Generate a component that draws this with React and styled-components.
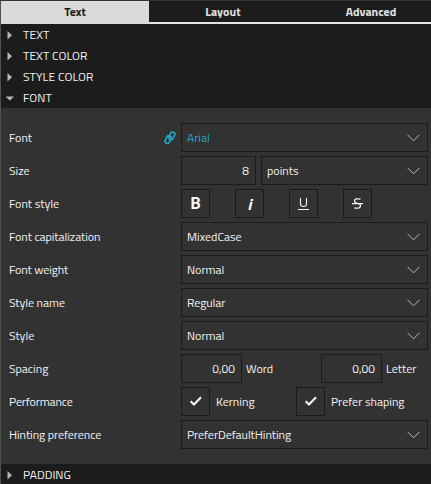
import React from "react";
import styled, { createGlobalStyle } from "styled-components";

const Global = createGlobalStyle`
  * { box-sizing: border-box; }
  body { margin: 0; background: #323232; overflow: hidden; }
`;
const Panel = styled.main`
  width: 431px; height: 484px; display: flex; flex-direction: column; overflow: hidden;
  border: solid #50504c; border-width: 1px 0 0 1px; border-top-color: #343434;
  background: #323232; color: #f2f2f2;
  font: 12px/16px "Titillium Web", Roboto, sans-serif;
`;
const Tabs = styled.nav`
  height: 23px; flex: none; display: grid; grid-template-columns: repeat(3, 148px);
  background: #1c1c1c; border-bottom: 2px solid #e2e2e2;
`;
const Tab = styled.button`
  height: ${p => (p.$active ? 23 : 21)}px; border: 0; font: inherit; font-weight: 700;
  padding: ${p => (p.$active ? "0 0 1px" : "1px 0 0")};
  background: ${p => (p.$active ? "#dadada" : "#1c1c1c")};
  color: ${p => (p.$active ? "#1c1c1c" : "#e2e2e2")};
`;
const SectionHeader = styled.header`
  height: 21px; flex: none; display: grid; grid-template-columns: 14px 1fr; column-gap: 6px;
  align-items: center; padding: 1px 0 0 2px; background: #1c1c1c;
`;
const Arrow = styled.svg`
  width: 14px; height: 14px; display: block; fill: #b8b8b8;
`;
const Form = styled.section`
  height: 356px; flex: none; padding: 15px 3px 0 8px; display: flex; flex-direction: column; gap: 4px;
`;
const Row = styled.div`
  height: 29px; display: grid; grid-template-columns: 155px 17px 1fr; align-items: center;
`;
const Text = styled.span`
  white-space: nowrap; letter-spacing: ${p => p.$ls || 0}px; color: ${p => p.$color || "inherit"};
`;
const Controls = styled.div`
  display: flex; height: 29px; align-items: center;
`;
const Field = styled.div`
  width: ${p => p.$w}px; height: 29px; flex: none; display: flex; align-items: center;
  justify-content: ${p => p.$justify || "space-between"}; border: 1px dotted #111;
  background: linear-gradient(#323232, #323232) padding-box, linear-gradient(#252525, #252525) border-box;
  padding: 0 ${p => p.$pr ?? 7}px 0 ${p => p.$pl ?? 5}px; margin-right: ${p => p.$mr || 0}px;
`;
const Pair = styled.div`
  width: ${p => p.$w}px; display: flex; align-items: center;
`;
const Icon = styled.svg`
  display: block; flex: none; fill: none; stroke: ${p => p.$color || "#f4f4f4"}; stroke-width: ${p => p.$sw || 1};
`;
const Glyph = styled.span`
  font: ${p => (p.$italic ? "italic" : "normal")} 700 16px/20px ${p => (p.$italic ? '"Titillium Web", ' : "")}Roboto, sans-serif;
  color: #fafafa;
`;

const Chevron = () => <Icon width="13" height="8" viewBox="0 0 13 8" $color="#b8b8b8"><path d="M.5 .8 6.5 6.8 12.5 .8" /></Icon>;
const Check = () => <Icon width="14" height="11" viewBox="0 0 14 11" $sw={2.1}><path d="M1.7 5.2 5 8.5 12 1.3" /></Icon>;
const LinkIcon = () => (
  <Icon width="12" height="14" viewBox="0 0 12 14" $color="#26a6cb" $sw={1.6}>
    <rect x="-2.2" y="-3.8" width="4.4" height="7.6" rx="1.6" transform="translate(7.8 4.9) rotate(27)" />
    <rect x="-2.2" y="-3.8" width="4.4" height="7.6" rx="1.6" transform="translate(4.1 8.6) rotate(27)" />
  </Icon>
);
const Header = ({ open, label, ls }) => (
  <SectionHeader>
    <Arrow viewBox="0 0 14 14"><path d={open ? "M2.5 5.5H11L6.8 9.5Z" : "M4.5 3V11.5L9 7.2Z"} /></Arrow>
    <Text $ls={ls}>{label}</Text>
  </SectionHeader>
);
const FormRow = ({ label, ls, linked, children }) => (
  <Row><Text $ls={ls}>{label}</Text><span>{linked && <LinkIcon />}</span><Controls>{children}</Controls></Row>
);
const Select = ({ w = 247, value, color, ls }) => (
  <Field $w={w}><Text $color={color} $ls={ls}>{value}</Text><Chevron /></Field>
);

export default function App() {
  return (
    <Panel>
      <Global />
      <Tabs>
        <Tab $active><Text>Text</Text></Tab><Tab><Text $ls={0.1}>Layout</Text></Tab><Tab><Text>Advanced</Text></Tab>
      </Tabs>
      <Header label="TEXT" ls={0.1} /><Header label="TEXT COLOR" ls={0.08} /><Header label="STYLE COLOR" ls={0.1} /><Header label="FONT" ls={0.1} open />
      <Form>
        <FormRow label="Font" linked><Select value="Arial" color="#26a6cb" /></FormRow>
        <FormRow label="Size">
          <Field $w={75} $justify="flex-end" $pr={6} $mr={5}><Text>8</Text></Field><Select w={167} value="points" />
        </FormRow>
        <FormRow label="Font style">
          <Field $w={29} $justify="center" $pl={0} $pr={0} $mr={25}><Glyph>B</Glyph></Field>
          <Field $w={29} $justify="center" $pl={0} $pr={0} $mr={25}><Glyph $italic>i</Glyph></Field>
          <Field $w={29} $justify="center" $pl={0} $pr={0} $mr={25}>
            <Icon width="11" height="13" viewBox="0 0 11 13" $sw={1.1}><path d="M2.5 1V7Q2.5 9.5 5.5 9.5T8.5 7V1M0 12.5H11" /></Icon>
          </Field>
          <Field $w={29} $justify="center" $pl={0} $pr={0}>
            <Icon width="11" height="11" viewBox="0 0 11 11" $sw={1.25}><path d="M8.5 1.2Q2.5 -.2 2.5 2.8Q2.5 4.8 5.5 5.3Q8.5 6 8.5 7.7Q8.5 11 2.3 9.8M0 5.5H11" /></Icon>
          </Field>
        </FormRow>
        <FormRow label="Font capitalization" ls={-0.06}><Select value="MixedCase" /></FormRow>
        <FormRow label="Font weight" ls={-0.1}><Select value="Normal" /></FormRow>
        <FormRow label="Style name" ls={-0.05}><Select value="Regular" ls={-0.08} /></FormRow>
        <FormRow label="Style"><Select value="Normal" /></FormRow>
        <FormRow label="Spacing">
          <Pair $w={140}><Field $w={61} $justify="flex-end" $pr={6} $mr={4}><Text>0,00</Text></Field><Text>Word</Text></Pair>
          <Pair><Field $w={61} $justify="flex-end" $pr={6} $mr={4}><Text>0,00</Text></Field><Text>Letter</Text></Pair>
        </FormRow>
        <FormRow label="Performance" ls={-0.15}>
          <Pair $w={115}><Field $w={29} $justify="center" $pl={0} $pr={0} $mr={6}><Check /></Field><Text>Kerning</Text></Pair>
          <Pair><Field $w={29} $justify="center" $pl={0} $pr={0} $mr={6}><Check /></Field><Text>Prefer shaping</Text></Pair>
        </FormRow>
        <FormRow label="Hinting preference" ls={-0.06}><Select value="PreferDefaultHinting" ls={-0.05} /></FormRow>
      </Form>
      <Header label="PADDING" />
    </Panel>
  );
}
